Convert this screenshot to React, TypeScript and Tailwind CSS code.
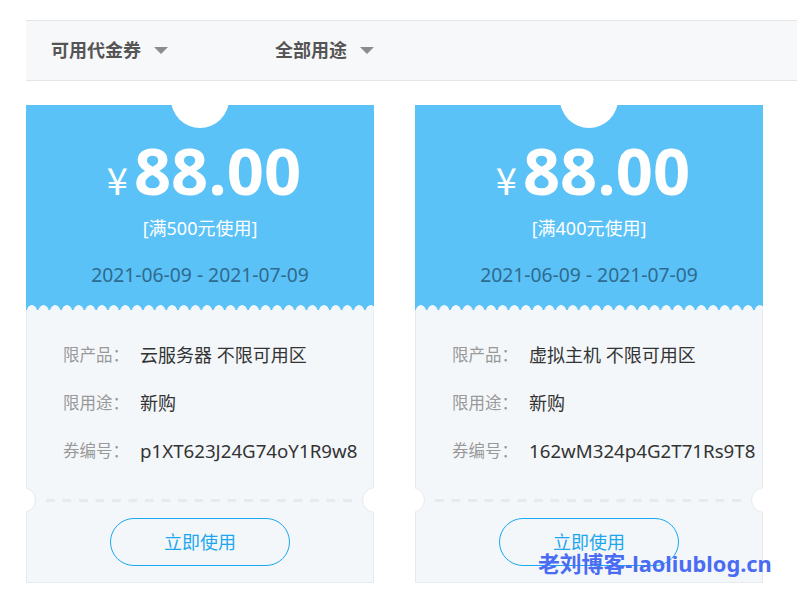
import React from 'react';

const font = { fontFamily: '"Noto Sans", "Noto Sans CJK SC", sans-serif' };

type Coupon = {
  limit: string;
  product: string;
  code: string;
};

const coupons: Coupon[] = [
  { limit: '[满500元使用]', product: '云服务器 不限可用区', code: 'p1XT623J24G74oY1R9w8' },
  { limit: '[满400元使用]', product: '虚拟主机 不限可用区', code: '162wM324p4G2T71Rs9T8' },
];

function Caret() {
  return (
    <svg width="14" height="8" viewBox="0 0 14 8" className="ml-[13px]">
      <path d="M0 0 H14 L7 7 Z" fill="#8c8c8c" />
    </svg>
  );
}

function CouponCard({ coupon }: { coupon: Coupon }) {
  return (
    <div className="relative w-[348px] overflow-hidden">
      <div className="bg-[#5bc2f7] h-[205px] flex flex-col items-center">
        <div className="flex items-baseline pt-[33px] pl-[8px] h-[97px] text-white">
          <span className="text-[38px] leading-none mr-[6px] font-['Noto_Sans_CJK_SC',sans-serif]">¥</span>
          <span className="text-[65px] leading-none font-bold font-['Open_Sans',sans-serif]">88.00</span>
        </div>
        <div className="mt-[14px] h-[24px] leading-[24px] text-[18px] text-white">{coupon.limit}</div>
        <div className="mt-[22px] h-[26px] leading-[26px] text-[19.3px] text-[#2e6b8f]">2021-06-09 - 2021-07-09</div>
        <div className="mt-auto w-full h-[5px] bg-[radial-gradient(circle_at_50%_100%,#f4f7fa_4.5px,transparent_5px)] bg-[length:11.7px_5px]" />
      </div>

      <div className="bg-[#f4f7fa] border-x border-b border-[#e6e9ed] pt-[21px] pb-[16px]">
        <div className="pl-[36px] text-[16.5px]">
          <div className="flex items-center h-[48px]">
            <span className="w-[77px] text-[#999]">限产品：</span>
            <span className="text-[#333] text-[18px]">{coupon.product}</span>
          </div>
          <div className="flex items-center h-[48px]">
            <span className="w-[77px] text-[#999]">限用途：</span>
            <span className="text-[#333] text-[18px]">新购</span>
          </div>
          <div className="flex items-center h-[48px]">
            <span className="w-[77px] text-[#999]">券编号：</span>
            <span className="text-[#333] text-[18.7px]">{coupon.code}</span>
          </div>
        </div>

        <div className="mx-[19px] mt-[24px] h-[3px] bg-[linear-gradient(to_right,#e7e9ec_9px,transparent_9px)] bg-[length:16.5px_3px]" />

        <div className="flex justify-center mt-[16px]">
          <button className="w-[180px] h-[48px] rounded-full border border-[#1aa8f0] text-[#1da6f0] text-[18px] bg-transparent">
            立即使用
          </button>
        </div>
      </div>

      <div className="absolute left-[145px] top-[-35px] w-[58px] h-[58px] rounded-full bg-white" />
      <div className="absolute left-[-16px] top-[382px] w-[26px] h-[26px] rounded-full bg-white border border-[#e6e9ed]" />
      <div className="absolute right-[-14px] top-[382px] w-[26px] h-[26px] rounded-full bg-white border border-[#e6e9ed]" />
    </div>
  );
}

export default function App() {
  return (
    <div className="relative w-[797px] h-[602px] bg-white pt-[20px] overflow-hidden" style={font}>
      <div className="ml-[26px] h-[61px] bg-[#f7f8fa] border-y border-[#e4e5e7] flex items-center pl-[25px]">
        <div className="w-[224px] flex items-center">
          <span className="text-[18px] font-bold text-[#555]">可用代金券</span>
          <Caret />
        </div>
        <div className="flex items-center">
          <span className="text-[18px] font-bold text-[#555]">全部用途</span>
          <Caret />
        </div>
      </div>

      <div className="flex gap-[41px] pl-[26px] mt-[24px]">
        {coupons.map((c) => (
          <CouponCard key={c.code} coupon={c} />
        ))}
      </div>

      <div className="absolute left-[538px] top-[550px] text-[21.8px] font-bold text-[#4a6cf3] leading-[28px]">
        老刘博客-laoliublog.cn
      </div>
    </div>
  );
}
